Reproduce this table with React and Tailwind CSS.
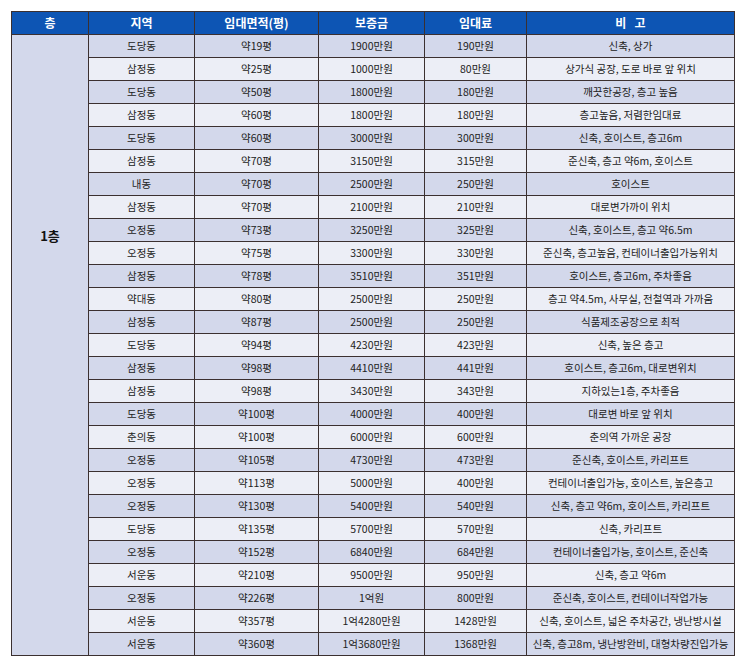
const rows = [
  ["도당동", "약19평", "1900만원", "190만원", "신축, 상가"],
  ["삼정동", "약25평", "1000만원", "80만원", "상가식 공장, 도로 바로 앞 위치"],
  ["도당동", "약50평", "1800만원", "180만원", "깨끗한공장, 층고 높음"],
  ["삼정동", "약60평", "1800만원", "180만원", "층고높음, 저렴한임대료"],
  ["도당동", "약60평", "3000만원", "300만원", "신축, 호이스트, 층고6m"],
  ["삼정동", "약70평", "3150만원", "315만원", "준신축, 층고 약6m, 호이스트"],
  ["내동", "약70평", "2500만원", "250만원", "호이스트"],
  ["삼정동", "약70평", "2100만원", "210만원", "대로변가까이 위치"],
  ["오정동", "약73평", "3250만원", "325만원", "신축, 호이스트, 층고 약6.5m"],
  ["오정동", "약75평", "3300만원", "330만원", "준신축, 층고높음, 컨테이너출입가능위치"],
  ["삼정동", "약78평", "3510만원", "351만원", "호이스트, 층고6m, 주차좋음"],
  ["약대동", "약80평", "2500만원", "250만원", "층고 약4.5m, 사무실, 전철역과 가까움"],
  ["삼정동", "약87평", "2500만원", "250만원", "식품제조공장으로 최적"],
  ["도당동", "약94평", "4230만원", "423만원", "신축, 높은 층고"],
  ["삼정동", "약98평", "4410만원", "441만원", "호이스트, 층고6m, 대로변위치"],
  ["삼정동", "약98평", "3430만원", "343만원", "지하있는1층, 주차좋음"],
  ["도당동", "약100평", "4000만원", "400만원", "대로변 바로 앞 위치"],
  ["춘의동", "약100평", "6000만원", "600만원", "춘의역 가까운 공장"],
  ["오정동", "약105평", "4730만원", "473만원", "준신축, 호이스트, 카리프트"],
  ["오정동", "약113평", "5000만원", "400만원", "컨테이너출입가능, 호이스트, 높은층고"],
  ["오정동", "약130평", "5400만원", "540만원", "신축, 층고 약6m, 호이스트, 카리프트"],
  ["도당동", "약135평", "5700만원", "570만원", "신축, 카리프트"],
  ["오정동", "약152평", "6840만원", "684만원", "컨테이너출입가능, 호이스트, 준신축"],
  ["서운동", "약210평", "9500만원", "950만원", "신축, 층고 약6m"],
  ["오정동", "약226평", "1억원", "800만원", "준신축, 호이스트, 컨테이너작업가능"],
  ["서운동", "약357평", "1억4280만원", "1428만원", "신축, 호이스트, 넓은 주차공간, 냉난방시설"],
  ["서운동", "약360평", "1억3680만원", "1368만원", "신축, 층고8m, 냉난방완비, 대형차량진입가능"],
];

const font = { fontFamily: '"Noto Sans CJK KR", "Noto Sans", sans-serif' };

export default function App() {
  return (
    <div className="w-[743px] h-[669px] bg-white pt-[11px] pl-[11px]" style={font}>
      <table className="table-fixed border-collapse w-[723px] border border-[#3b3030]">
        <colgroup>
          <col className="w-[77px]" />
          <col className="w-[106px]" />
          <col className="w-[124px]" />
          <col className="w-[106px]" />
          <col className="w-[102px]" />
          <col className="w-[208px]" />
        </colgroup>
        <thead>
          <tr className="h-[23px] bg-[#0d55b4] text-white text-[12px] font-bold">
            {["층", "지역", "임대면적(평)", "보증금", "임대료", "비\u00a0\u00a0\u00a0고"].map((h, i) => (
              <th key={i} className="border border-[#3b3030] p-0 text-center font-bold leading-none whitespace-pre">
                {h}
              </th>
            ))}
          </tr>
        </thead>
        <tbody>
          {rows.map((r, i) => (
            <tr
              key={i}
              className={`h-[23px] text-[10.5px] text-[#222] ${i % 2 === 0 ? "bg-[#d3d8eb]" : "bg-[#eceef6]"}`}
            >
              {i === 0 && (
                <td
                  rowSpan={rows.length}
                  className="border border-[#3b3030] bg-[#d3d8eb] text-center align-top pt-[192px] text-[13px] leading-[18px] font-bold text-[#111] px-0 pb-0"
                >
                  1층
                </td>
              )}
              {r.map((c, j) => (
                <td key={j} className="border border-[#3b3030] p-0 text-center leading-none whitespace-nowrap">
                  {c}
                </td>
              ))}
            </tr>
          ))}
        </tbody>
      </table>
    </div>
  );
}
